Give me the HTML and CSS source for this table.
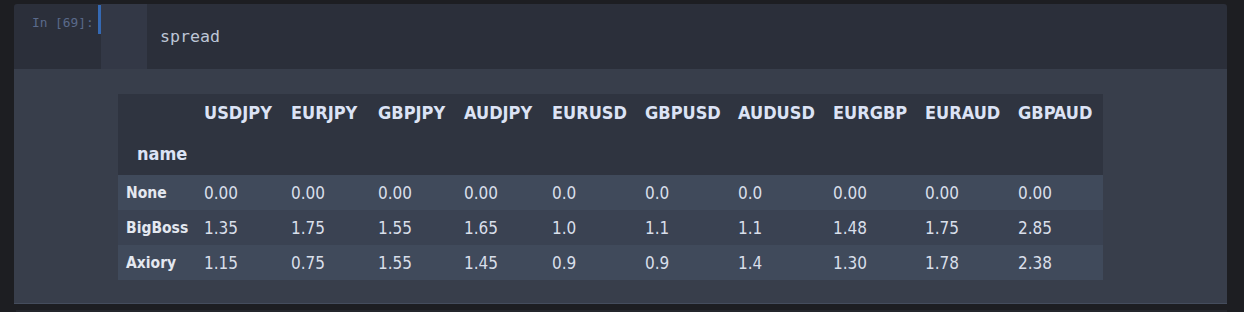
FILE: index.html
```html
<!DOCTYPE html>
<html lang="en">
<head>
    <meta charset="UTF-8">
    <title>spread</title>
    <link rel="stylesheet" href="styles.css">
</head>
<body>
    <div class="cell">
        <!-- 入力エリア -->
        <div class="input">
            <div class="prompt">In [69]:</div>
            <div class="marker"></div>
            <div class="gutter"></div>
            <div class="code">spread</div>
        </div>

        <!-- 出力エリア -->
        <div class="output">
            <table class="dataframe">
                <colgroup>
                    <col class="c-idx">
                    <col class="c87"><col class="c87"><col class="c86"><col class="c88">
                    <col class="c93"><col class="c93"><col class="c95"><col class="c92">
                    <col class="c93"><col class="c93">
                </colgroup>
                <thead>
                    <tr class="head-cols">
                        <th></th>
                        <th>USDJPY</th><th>EURJPY</th><th>GBPJPY</th><th>AUDJPY</th><th>EURUSD</th>
                        <th>GBPUSD</th><th>AUDUSD</th><th>EURGBP</th><th>EURAUD</th><th>GBPAUD</th>
                    </tr>
                    <tr class="head-name">
                        <th class="name">name</th>
                        <th></th><th></th><th></th><th></th><th></th>
                        <th></th><th></th><th></th><th></th><th></th>
                    </tr>
                </thead>
                <tbody>
                    <tr>
                        <th>None</th>
                        <td>0.00</td><td>0.00</td><td>0.00</td><td>0.00</td><td>0.0</td>
                        <td>0.0</td><td>0.0</td><td>0.00</td><td>0.00</td><td>0.00</td>
                    </tr>
                    <tr>
                        <th>BigBoss</th>
                        <td>1.35</td><td>1.75</td><td>1.55</td><td>1.65</td><td>1.0</td>
                        <td>1.1</td><td>1.1</td><td>1.48</td><td>1.75</td><td>2.85</td>
                    </tr>
                    <tr>
                        <th>Axiory</th>
                        <td>1.15</td><td>0.75</td><td>1.55</td><td>1.45</td><td>0.9</td>
                        <td>0.9</td><td>1.4</td><td>1.30</td><td>1.78</td><td>2.38</td>
                    </tr>
                </tbody>
            </table>
        </div>
    </div>
    <div class="next-cell"></div>
</body>
</html>
```

FILE: styles.css
```css
/* dark notebook */
body {
    margin: 0;
    padding: 4px 17px 0 14px;
    background-color: #1d1e22;
    font-family: 'DejaVu Sans', sans-serif;
}
.cell {
    border-radius: 3px 3px 0 0;
    overflow: hidden;
}
.input {
    display: flex;
    height: 65px;
    background-color: #2b2f3a;
}
.prompt {
    width: 84px;
    padding: 11px 0 0 18px;
    box-sizing: border-box;
    font-family: 'DejaVu Sans Mono', monospace;
    font-size: 12.8px;
    color: #5a6a8a;
}
.marker {
    width: 3px;
    height: 29px;
    margin-top: 1px;
    background-color: #3569b3;
}
.gutter {
    width: 46px;
    background-color: #333846;
}
.code {
    flex: 1;
    padding: 23px 0 0 13px;
    font-family: 'DejaVu Sans Mono', monospace;
    font-size: 16.6px;
    color: #bdc6d6;
}
.output {
    background-color: #383e4b;
    padding: 25px 0 23px 104px;
    border-bottom: 1px solid #454d5d;
}
.dataframe {
    border-collapse: collapse;
    table-layout: fixed;
    font-stretch: condensed;
    color: #d9dfea;
}
.c-idx { width: 78px; }
.c86 { width: 86px; }
.c87 { width: 87px; }
.c88 { width: 88px; }
.c92 { width: 92px; }
.c93 { width: 93px; }
.c95 { width: 95px; }
.dataframe th, .dataframe td {
    text-align: left;
    padding: 0 0 0 8px;
    white-space: nowrap;
}
.dataframe thead {
    background-color: #2f3440;
}
.dataframe thead th {
    font-size: 18px;
    font-weight: bold;
    color: #dce3f5;
}
.head-cols { height: 37px; }
.head-name { height: 44px; }
.dataframe .name {
    padding-left: 19px;
}
.dataframe tbody tr {
    height: 35px;
    background-color: #404a5b;
}
.dataframe tbody tr:nth-child(even) {
    background-color: #3a4252;
}
.dataframe tbody th {
    font-size: 15.5px;
    font-weight: bold;
    color: #e4e8f0;
}
.dataframe tbody td {
    font-size: 17px;
}
.next-cell {
    height: 2px;
    margin: 6px 0 0 2px;
    background-color: #24262c;
}
```
